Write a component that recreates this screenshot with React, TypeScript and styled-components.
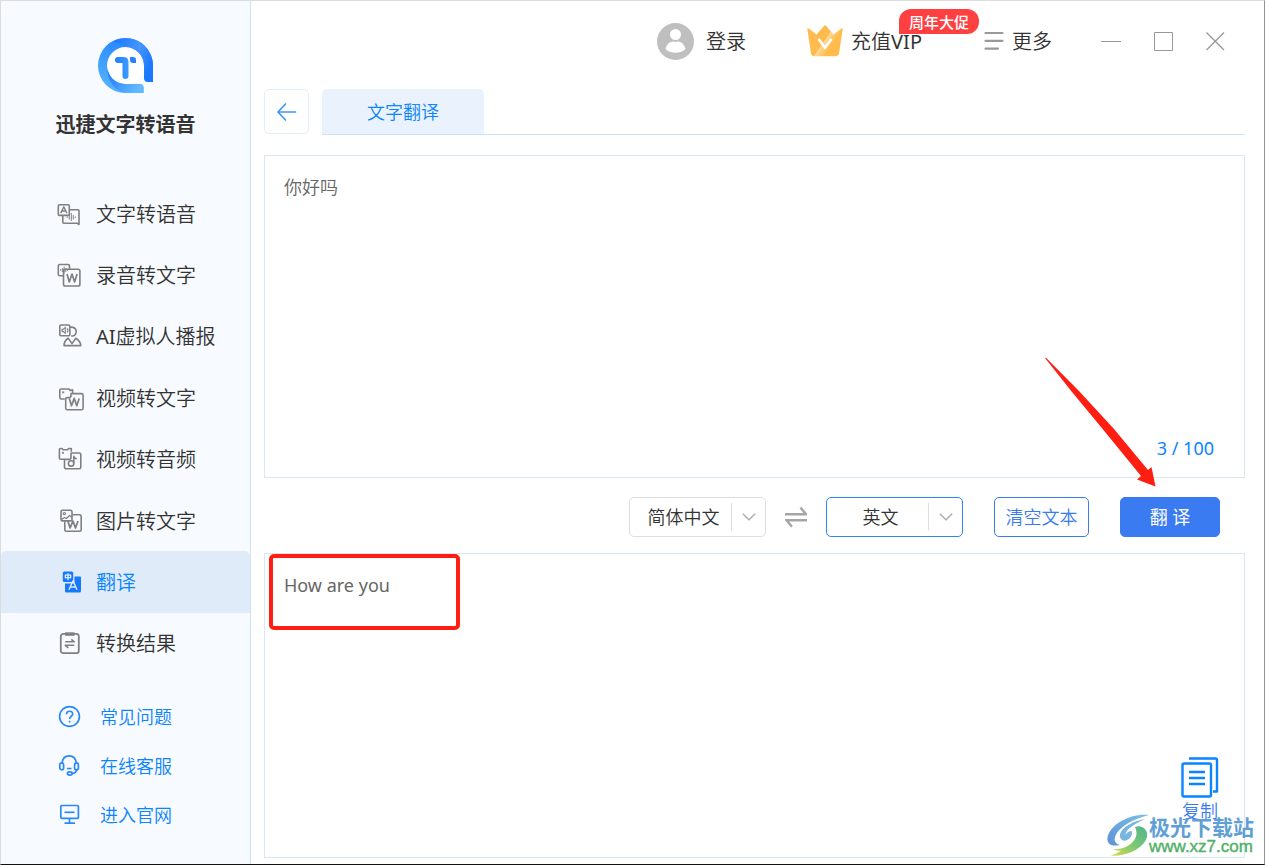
import React from "react";
import styled, { createGlobalStyle } from "styled-components";

const FONT = `"Noto Sans", "Noto Sans CJK SC", sans-serif`;
const CJK = `"Noto Sans CJK SC", "Noto Sans", sans-serif`;

const GlobalStyle = createGlobalStyle`
  *, *::before, *::after { box-sizing: border-box; }
  body { margin: 0; background: #fff; font-family: ${FONT}; font-weight: 350; color: #333; }
  button, select, textarea { font: inherit; color: inherit; margin: 0; }
  button { cursor: pointer; padding: 0; }
  a { color: inherit; text-decoration: none; }
  svg { display: block; flex: none; }
`;

const Window = styled.div`
  display: flex;
  min-height: 100vh;
  border: 1px solid #dcdcdc;
  border-right-color: #8f9499;
  border-bottom-color: #111;
`;

/* Sidebar */
const Sidebar = styled.aside`
  flex: none;
  width: 250px;
  display: flex;
  flex-direction: column;
  background: #f7faff;
  border-right: 1px solid #cfe3f8;
`;

const Brand = styled.div`
  display: flex;
  flex-direction: column;
  align-items: center;
  gap: 16px;
  height: 182px;
  padding-top: 37px;
`;

const BrandName = styled.h1`
  margin: 0;
  font: 700 20px/30px ${CJK};
`;

const Nav = styled.nav`
  display: grid;
  grid-auto-rows: 1fr;
  height: 491px;
`;

const NavItem = styled.a<{ $active?: boolean }>`
  display: flex;
  align-items: center;
  gap: 14px;
  padding-left: 57px;
  font-size: 20px;
  line-height: 28px;
  border-radius: 5px 5px 0 0;
  color: ${(p) => (p.$active ? "#0a84ff" : "#333")};
  background: ${(p) => (p.$active ? "#dfebf9" : "transparent")};
`;

const Label = styled.span`
  padding-top: 2px;
`;

const Latin = styled.span`
  font-weight: 400;
`;

const HelpLinks = styled.div`
  padding-top: 18px;
`;

const HelpLink = styled.a`
  display: flex;
  align-items: center;
  gap: 18px;
  height: 49px;
  padding-left: 57px;
  font-size: 18px;
  line-height: 26px;
  color: #0a84ff;
`;

/* Main area */
const Main = styled.main`
  flex: 1;
  min-width: 0;
  display: flex;
  flex-direction: column;
  padding: 0 19px 6px 13px;
`;

const Header = styled.header`
  display: flex;
  align-items: center;
  justify-content: flex-end;
  height: 88px;
  padding: 0 20px 8px 0;
`;

const HeaderButton = styled.button<{ $gap: number; $after: number }>`
  position: relative;
  display: flex;
  align-items: center;
  gap: ${(p) => p.$gap}px;
  margin-right: ${(p) => p.$after}px;
  border: 0;
  background: none;
  font-size: 20px;
  line-height: 30px;
  white-space: nowrap;
`;

const Promo = styled.span`
  position: absolute;
  left: 92px;
  top: -16px;
  width: 80px;
  height: 25px;
  border-radius: 12px 12px 12px 0;
  background: #ff4040;
  color: #fff;
  font: 500 15px/25px ${CJK};
  text-align: center;
`;

const WindowControls = styled.div`
  display: flex;
  gap: 32px;
`;

const ControlButton = styled.button`
  width: 20px;
  height: 20px;
  border: 0;
  background: none;
`;

const TabBar = styled.div`
  display: flex;
  gap: 13px;
  margin-bottom: 20px;
`;

const BackButton = styled.button`
  display: grid;
  place-items: center;
  width: 45px;
  height: 45px;
  border: 1px solid #e2eefc;
  border-radius: 5px;
  background: #fff;
`;

const TabTrack = styled.div`
  flex: 1;
  display: flex;
  height: 46px;
  border-bottom: 1px solid #cfe3f8;
`;

const Tab = styled.button`
  width: 162px;
  border: 0;
  border-radius: 5px 5px 0 0;
  background: #eaf2fe;
  color: #0a84ff;
  font-size: 18px;
  line-height: 26px;
`;

const Panel = styled.section<{ $basis: number }>`
  position: relative;
  display: flex;
  flex: 1 1 ${(p) => p.$basis}px;
  border: 1px solid #dbe6f5;
`;

const TextBox = styled.textarea<{ $latin?: boolean }>`
  flex: 1;
  padding: 18px 19px;
  border: 0;
  outline: 0;
  resize: none;
  background: transparent;
  color: #666;
  font-size: 18px;
  font-weight: ${(p) => (p.$latin ? 400 : 350)};
  line-height: 26px;
`;

const Counter = styled.span`
  position: absolute;
  right: 30px;
  bottom: 16px;
  color: #0a84ff;
  font-size: 18px;
  font-weight: 400;
  line-height: 26px;
`;

const Toolbar = styled.div`
  display: flex;
  align-items: center;
  justify-content: flex-end;
  margin: 19px 0 16px;
  padding-right: 25px;
`;

const SelectBox = styled.div<{ $active?: boolean }>`
  position: relative;
  width: 137px;
  height: 40px;
  border: 1px solid ${(p) => (p.$active ? "#2f86f6" : "#dedede")};
  border-radius: 5px;
`;

const Select = styled.select`
  appearance: none;
  width: 100%;
  height: 100%;
  padding: 0 34px 0 6px;
  border: 0;
  outline: 0;
  background: transparent;
  font-size: 18px;
  text-align: center;
  text-align-last: center;
`;

const SelectArrow = styled.span`
  position: absolute;
  top: 5px;
  right: 0;
  display: grid;
  place-items: center;
  width: 34px;
  height: 28px;
  border-left: 1px solid #dedede;
  pointer-events: none;
`;

const SwapButton = styled.button`
  width: 60px;
  height: 40px;
  display: grid;
  place-items: center;
  border: 0;
  background: none;
`;

const ActionButton = styled.button<{ $primary?: boolean }>`
  width: ${(p) => (p.$primary ? 100 : 95)}px;
  height: 40px;
  margin-left: 31px;
  border: 1px solid #3a7bf2;
  border-radius: 5px;
  background: ${(p) => (p.$primary ? "#3a7bf2" : "#fff")};
  color: ${(p) => (p.$primary ? "#fff" : "#3a7bf2")};
  font-size: 18px;
  font-weight: ${(p) => (p.$primary ? 400 : 350)};
  line-height: 26px;
`;

const PointerAnchor = styled.div`
  position: relative;
  display: flex;
`;

const Pointer = styled.svg`
  position: absolute;
  right: 63px;
  bottom: 49px;
  z-index: 2;
  pointer-events: none;
`;

const Highlight = styled.div`
  position: absolute;
  left: 4px;
  top: 0;
  width: 191px;
  height: 76px;
  border: 4px solid #ff1e12;
  border-radius: 5px;
  pointer-events: none;
`;

const CopyButton = styled.button`
  position: absolute;
  right: 25px;
  bottom: 33px;
  display: flex;
  flex-direction: column;
  align-items: center;
  border: 0;
  background: none;
  color: #3a7bf2;
  font-size: 18px;
  line-height: 26px;
`;

const Watermark = styled.a`
  position: absolute;
  right: -10px;
  bottom: 1px;
  display: flex;
  align-items: center;
`;

const WatermarkText = styled.span`
  display: flex;
  flex-direction: column;
`;

const WatermarkName = styled.span`
  color: #5f9fd6;
  font: 700 21px/24px ${CJK};
`;

const WatermarkUrl = styled.span`
  color: #4fb067;
  font: 400 17px/18px "Liberation Sans", sans-serif;
  -webkit-text-stroke: 0.4px #4fb067;
`;

/* Icons */
const NavIcon = styled.svg`
  overflow: visible;
`;

const NavSvg = ({ children }: { children: React.ReactNode }) => (
  <NavIcon width="24" height="24" viewBox="0 0 24 24" fill="none" stroke="#808080" strokeWidth="1.6" strokeLinejoin="round" aria-hidden="true">
    {children}
  </NavIcon>
);

const TextToSpeech = () => (
  <NavSvg>
    <rect x="0.3" y="2.8" width="11" height="10.6" rx="1.2" />
    <path d="M2.7 11.200 5.800 4.800 8.900 11.200M3.900 9h3.800" strokeWidth="1.400" />
    <path d="M11.500 7.700H20a1 1 0 0 1 1 1v13.800l-2-1.300H5.800a1 1 0 0 1-1-1v-6.600" />
    <path d="M9.300 14.500v1.500M11.300 13v4.500M13.300 11v8M15.300 13v4.500M17.300 14.500v1.500" strokeWidth="1" />
  </NavSvg>
);

const AudioToText = () => (
  <NavSvg>
    <path d="M5.300 12.700H1.800a1.500 1.500 0 0 1-1.500-1.500V3a1.500 1.500 0 0 1 1.500-1.500H10A1.500 1.500 0 0 1 11.500 3v3" />
    <path d="M2.700 6.200v1.600M4.400 5v4M6.100 3.600v6.800M7.800 5v4M9.500 6.200v1.600" strokeWidth="1" />
    <rect x="5.500" y="6.200" width="16.400" height="16.800" rx="1.800" />
    <path d="m9 11 2.300 8 2.700-8 2.600 8 2.500-8" strokeWidth="1.700" />
  </NavSvg>
);

const VirtualHost = () => (
  <NavSvg>
    <rect x="1.800" y="1" width="10" height="10.800" rx="1.200" />
    <path d="M4 5.400v2l1.300.2 2 1.800v-6l-2 1.800zM9.200 4.400q1.600 2 0 4" strokeWidth="1.100" />
    <path d="M12 3.200c3.600-.6 6.200 1.200 6.200 4.400s-2.200 5-5 4.200" />
    <path d="M6 21.600c0-3.200 1.200-5.500 4.200-7.400l3.800 5.400 3.800-5.400c3 1.900 5 4.200 5 7.400z" />
  </NavSvg>
);

const VideoToText = () => (
  <NavSvg>
    <path d="M6.800 13H3.300a1.500 1.500 0 0 1-1.500-1.500v-7A1.500 1.500 0 0 1 3.300 3h7.400q1.300 0 1.300 1.600l2.600-.8v3.400" />
    <path d="M4.200 6.300h2" strokeWidth="1.800" />
    <path d="M13 7.600h10.500a1.600 1.600 0 0 1 1.600 1.600v13a1.600 1.600 0 0 1-1.600 1.600H9.300a1.600 1.600 0 0 1-1.600-1.600V13.100q0-1.500 1.500-1.500h2q1.800 0 1.800-2z" />
    <path d="m11.300 12.400 2.200 7.400 2.700-7.400 2.600 7.400 2.400-7.400" strokeWidth="1.700" />
  </NavSvg>
);

const VideoToAudio = () => (
  <NavSvg>
    <path d="M6.300 12.200H2.700a1.300 1.300 0 0 1-1.300-1.300V2.400q0-.9.9-.9H4l1 1.200h4.600l1-1.200h2.700v3.200" />
    <path d="M3.900 5.800h2" strokeWidth="1.800" />
    <path d="M13 6h8.200a1.600 1.600 0 0 1 1.600 1.600v12.600a1.600 1.600 0 0 1-1.600 1.600H8.100a1.600 1.600 0 0 1-1.600-1.600v-7.800h4.400q2.100 0 2.100-2z" />
    <circle cx="13.100" cy="16.400" r="2.700" />
    <path d="M15.800 16.400V9.400q.4 2.200 3 2.400" />
  </NavSvg>
);

const ImageToText = () => (
  <NavSvg>
    <rect x="3" y="1.300" width="11" height="10.600" rx="1.500" />
    <circle cx="6.300" cy="4.600" r="1.100" strokeWidth="1.200" />
    <path d="m3.500 10.500 3-2 2 1 3-3 2.500 2" strokeWidth="1.200" />
    <path d="M14.500 5.800h7.200a1.500 1.500 0 0 1 1.500 1.500v13.500a1.500 1.500 0 0 1-1.500 1.500H8.300a1.500 1.500 0 0 1-1.500-1.500v-8.500" />
    <path d="m9.800 12 2.300 7 2.800-7 2.600 7 2.500-7" strokeWidth="1.800" />
  </NavSvg>
);

const Translate = () => (
  <NavSvg>
    <g stroke="none" fill="#1677ff">
      <rect x="4.800" y="1.500" width="10.400" height="10.500" rx="1.500" />
      <path d="M16.500 6.500H22a1 1 0 0 1 1 1V21a1.500 1.500 0 0 1-1.500 1.500h-13A1.500 1.500 0 0 1 7 21v-7.500h8q1.500 0 1.500-1.500z" />
    </g>
    <path d="M7.300 5h5.400v2.700H7.300zM10 3.300v7" stroke="#fff" strokeWidth="1.100" />
    <path d="m11 19.800 4-9 4 9M12.500 17h5" stroke="#dfebf9" strokeWidth="1.400" />
  </NavSvg>
);

const Results = () => (
  <NavSvg>
    <rect x="2.800" y="2.800" width="18" height="19.400" rx="2.500" strokeWidth="1.800" />
    <path d="M7 1.300h9.600v3.500H7z" fill="#808080" stroke="none" />
    <path d="M7.300 10.800h9l-3-2.500M16.300 14.300h-9l3 2.500" strokeWidth="1.600" />
  </NavSvg>
);

const HelpSvg = ({ children }: { children: React.ReactNode }) => (
  <svg width="24" height="24" viewBox="0 0 24 24" fill="none" stroke="#2b88f8" strokeWidth="1.700" aria-hidden="true">
    {children}
  </svg>
);

const Question = () => (
  <HelpSvg>
    <circle cx="11.500" cy="11.500" r="9.900" />
    <path d="M8.500 9.300c0-4 6.200-4 6.200-.3 0 2.300-3.100 2.300-3.100 5M11.600 15.800v1.700" />
  </HelpSvg>
);

const Headset = () => (
  <HelpSvg>
    <path d="M4 9.500C4.500 4.500 7.500 1.800 11.200 1.800s6.700 2.700 7.200 7.700" />
    <rect x="1.800" y="8.800" width="3.800" height="7" rx="1.900" />
    <rect x="16.600" y="8.800" width="3.800" height="7" rx="1.900" />
    <path d="M19 15.500q-1 3.500-4.800 4.200M9 14.500h4.500" />
    <ellipse cx="11.800" cy="19.500" rx="2.400" ry="1.600" />
  </HelpSvg>
);

const Monitor = () => (
  <HelpSvg>
    <rect x="2.800" y="2.500" width="17.600" height="12.800" rx="1" />
    <path d="M6.500 9.300h10" />
    <path d="M11.500 15.300v4.500M6.500 20.200h10.500" />
  </HelpSvg>
);

const Logo = () => (
  <svg width="55" height="55" viewBox="0 0 55 55" role="img" aria-label="迅捷文字转语音">
    <defs>
      <linearGradient id="ring" x1="0.200" y1="1" x2="0.700" y2="0">
        <stop offset="0" stopColor="#5ab4ff" />
        <stop offset="0.500" stopColor="#3b9bff" />
        <stop offset="1" stopColor="#1f7dff" />
      </linearGradient>
      <linearGradient id="arc" x1="0" y1="0" x2="1" y2="0.500">
        <stop offset="0" stopColor="#1a73ff" />
        <stop offset="0.600" stopColor="#4596ff" />
        <stop offset="1" stopColor="#1c78ff" />
      </linearGradient>
      <linearGradient id="tail" x1="0" y1="0" x2="1" y2="0.500">
        <stop offset="0" stopColor="#1a75ff" />
        <stop offset="1" stopColor="#62b8ff" />
      </linearGradient>
      <linearGradient id="stem" x1="0" y1="0" x2="1" y2="0">
        <stop offset="0" stopColor="#1f7dff" />
        <stop offset="1" stopColor="#3f9bff" />
      </linearGradient>
    </defs>
    <circle cx="27.500" cy="27.500" r="19" fill="#fff" />
    <path d="M55 27.500A27.500 27.500 0 1 0 27.500 55h18v-5q0-4-4-4h-14A18.500 18.500 0 1 1 46 27.500v12q0 4.500 4.500 4.500H55z" fill="url(#ring)" />
    <path d="M18 2A27.500 27.500 0 0 1 55 27.500V44h-4.500Q46 44 46 39.500v-12A18.500 18.500 0 0 0 27.500 9C26 6 22 4 15 4.500z" fill="url(#arc)" />
    <path d="M9.500 30c1 9 8 16 18 16h14q4 0 4 4v5H27.500C17 53 9 43 9.500 30z" fill="url(#tail)" />
    <path d="M20 19h5.500q5 0 5 5v14a3 3 0 0 1-6 0V25H20a3 3 0 0 1 0-6z" fill="url(#stem)" />
    <path d="M32 19h3a3 3 0 0 1 3 3v3h-3a3 3 0 0 1-3-3z" fill="#2482ff" />
  </svg>
);

const Avatar = () => (
  <svg width="37" height="37" viewBox="0 0 37 37" aria-hidden="true">
    <circle cx="18.500" cy="18.500" r="18.500" fill="#bfbfbf" />
    <circle cx="18.500" cy="11.500" r="5.500" fill="#fff" />
    <path d="M8.500 26c1-4.500 4.200-7.500 7.500-7.500 1.500 0 1.500.6 2.500.6s1-.6 2.500-.6c3.300 0 6.500 3 7.500 7.500-2.500 2.500-6 3.800-10 3.800S11 28.500 8.500 26z" fill="#fff" />
  </svg>
);

const Crown = () => (
  <svg width="36" height="32" viewBox="0 0 36 32" aria-hidden="true">
    <defs>
      <linearGradient id="gold" x1="0" y1="0.200" x2="1" y2="0.800">
        <stop offset="0.480" stopColor="#ffbc4d" />
        <stop offset="0.500" stopColor="#ffd99a" />
        <stop offset="0.640" stopColor="#ffc562" />
        <stop offset="0.700" stopColor="#ffbc4d" />
      </linearGradient>
    </defs>
    <path d="M.3 4.200Q.2 2.600 1.800 3.600L9.500 9.500 17 .8q1-1 2 0l7.500 8.700 7.700-5.900q1.600-1 1.500.6L32 28.500q-.5 2.800-3.500 2.800h-21q-3 0-3.500-2.800z" fill="url(#gold)" />
    <path d="m11.500 14 6.500 8.500 6.500-8.500" fill="none" stroke="#fff" strokeWidth="2.600" />
  </svg>
);

const Menu = () => (
  <svg width="20" height="20" viewBox="0 0 20 20" stroke="#999" strokeWidth="2.200" strokeLinecap="round" aria-hidden="true">
    <path d="M1.500 2h17M1.500 9.800h17M1.500 17.600h12.500" />
  </svg>
);

const Chevron = () => (
  <svg width="14" height="8" viewBox="0 0 14 8" fill="none" stroke="#aaa" strokeWidth="1.300" aria-hidden="true">
    <path d="m.8.8 6.200 6 6.200-6" />
  </svg>
);

const Swap = () => (
  <svg width="22" height="22" viewBox="0 0 22 22" fill="none" stroke="#a6a6a6" strokeWidth="2.400" aria-hidden="true">
    <path d="M0 8.200h21L15.500 1.500M22 14.200H1.500L7 20.800" />
  </svg>
);

const CopyIcon = () => (
  <svg width="38" height="41" viewBox="0 0 38 41" fill="none" stroke="#0a84ff" strokeWidth="2.400" strokeLinejoin="round" aria-hidden="true">
    <rect x="1.500" y="6.500" width="28.500" height="33" rx="1.500" />
    <path d="M8 1.500h26.500q1.500 0 1.500 1.500v31.500h-4M8 15h16M8 21h16M8 27h16" />
  </svg>
);

const Swirl = () => (
  <svg width="42" height="42" viewBox="0 0 42 42" aria-hidden="true">
    <defs>
      <linearGradient id="swirlGreen" x1="0" y1="1" x2="1" y2="0">
        <stop offset="0" stopColor="#d8dc50" />
        <stop offset="0.500" stopColor="#7cc873" />
        <stop offset="1" stopColor="#4fb592" />
      </linearGradient>
      <linearGradient id="swirlBlue" x1="0" y1="1" x2="1" y2="0">
        <stop offset="0" stopColor="#5c93d6" />
        <stop offset="1" stopColor="#7cc0e4" />
      </linearGradient>
    </defs>
    <path d="M42 1C24-1 3 10 .5 23.500-.5 30 5 33 13 31 6 29 6 23 12 16.500 19 9 30 4 42 1z" fill="url(#swirlBlue)" />
    <path d="M38 5C26 7 15 13 13 20c-1 5 3 8 7 6 4-1.500 6-6 4.500-9-3 0-5 2-6 4 0-5 8-11 19.500-16z" fill="#79b5e0" />
    <path d="M28 13c4 8 0 17-12 21-3 1-7 1.500-11 1 3 1 6 2 9 1.500C11 39 7 41 3 41.500c14 1 28-4 35-14 4-6 2-12-2-14-3-1.500-5-1.500-8-.5z" fill="url(#swirlGreen)" />
  </svg>
);

const navItems: { label: React.ReactNode; icon: React.ReactNode; active?: boolean }[] = [
  { label: "文字转语音", icon: <TextToSpeech /> },
  { label: "录音转文字", icon: <AudioToText /> },
  { label: <><Latin>AI</Latin>虚拟人播报</>, icon: <VirtualHost /> },
  { label: "视频转文字", icon: <VideoToText /> },
  { label: "视频转音频", icon: <VideoToAudio /> },
  { label: "图片转文字", icon: <ImageToText /> },
  { label: "翻译", icon: <Translate />, active: true },
  { label: "转换结果", icon: <Results /> },
];

const helpItems = [
  { label: "常见问题", icon: <Question /> },
  { label: "在线客服", icon: <Headset /> },
  { label: "进入官网", icon: <Monitor /> },
];

const LanguageSelect = ({ label, value, active }: { label: string; value: string; active?: boolean }) => (
  <SelectBox $active={active}>
    <Select aria-label={label} defaultValue={value}>
      <option>{value}</option>
    </Select>
    <SelectArrow>
      <Chevron />
    </SelectArrow>
  </SelectBox>
);

export default function App() {
  return (
    <>
      <GlobalStyle />
      <Window>
        <Sidebar>
          <Brand>
            <Logo />
            <BrandName>迅捷文字转语音</BrandName>
          </Brand>
          <Nav>
            {navItems.map((item, i) => (
              <NavItem key={i} href="#" $active={item.active} aria-current={item.active ? "page" : undefined}>
                {item.icon}
                <Label>{item.label}</Label>
              </NavItem>
            ))}
          </Nav>
          <HelpLinks>
            {helpItems.map((item) => (
              <HelpLink key={item.label} href="#">
                {item.icon}
                {item.label}
              </HelpLink>
            ))}
          </HelpLinks>
        </Sidebar>
        <Main>
          <Header>
            <HeaderButton $gap={12} $after={61}>
              <Avatar />
              <Label>登录</Label>
            </HeaderButton>
            <HeaderButton $gap={8} $after={62}>
              <Crown />
              <Label>充值<Latin>VIP</Latin></Label>
              <Promo>周年大促</Promo>
            </HeaderButton>
            <HeaderButton $gap={8} $after={49}>
              <Menu />
              <Label>更多</Label>
            </HeaderButton>
            <WindowControls>
              <ControlButton aria-label="最小化">
                <svg width="20" height="20" viewBox="0 0 20 20" stroke="#999"><path d="M0 10.500h20" /></svg>
              </ControlButton>
              <ControlButton aria-label="最大化">
                <svg width="20" height="20" viewBox="0 0 20 20" fill="none" stroke="#999"><path d="M1.500 1.500h18v18h-18z" /></svg>
              </ControlButton>
              <ControlButton aria-label="关闭">
                <svg width="20" height="20" viewBox="0 0 20 20" stroke="#999" strokeWidth="1.300"><path d="m1.500 1.500 17.500 17.500M19 1.500 1.500 19" /></svg>
              </ControlButton>
            </WindowControls>
          </Header>

          <TabBar>
            <BackButton aria-label="返回">
              <svg width="20" height="18" viewBox="0 0 20 18" fill="none" stroke="#3d96fa" strokeWidth="1.700" strokeLinecap="round" strokeLinejoin="round">
                <path d="M8.500 1 1 9l7.500 8M1 9h17.500" />
              </svg>
            </BackButton>
            <TabTrack role="tablist">
              <Tab role="tab" aria-selected="true">文字翻译</Tab>
            </TabTrack>
          </TabBar>

          <Panel $basis={323}>
            <TextBox aria-label="原文" defaultValue="你好吗" />
            <Counter>3 / 100</Counter>
          </Panel>

          <Toolbar>
            <LanguageSelect label="源语言" value="简体中文" />
            <SwapButton aria-label="交换语言">
              <Swap />
            </SwapButton>
            <LanguageSelect label="目标语言" value="英文" active />
            <ActionButton>清空文本</ActionButton>
            <PointerAnchor>
              <ActionButton $primary>翻 译</ActionButton>
              <Pointer width="113" height="131" viewBox="0 0 113 131" aria-hidden="true">
                <path d="M1 1 2 .8 35 34 70 72 104 113 107.500 110 111.500 129.500 93 122.500 97 119 57 70 28 35z" fill="#ff1e12" />
              </Pointer>
            </PointerAnchor>
          </Toolbar>

          <Panel $basis={305}>
            <TextBox $latin aria-label="译文" readOnly defaultValue="How are you" />
            <Highlight />
            <CopyButton>
              <CopyIcon />
              复制
            </CopyButton>
            <Watermark href="#">
              <Swirl />
              <WatermarkText>
                <WatermarkName>极光下载站</WatermarkName>
                <WatermarkUrl>www.xz7.com</WatermarkUrl>
              </WatermarkText>
            </Watermark>
          </Panel>
        </Main>
      </Window>
    </>
  );
}
